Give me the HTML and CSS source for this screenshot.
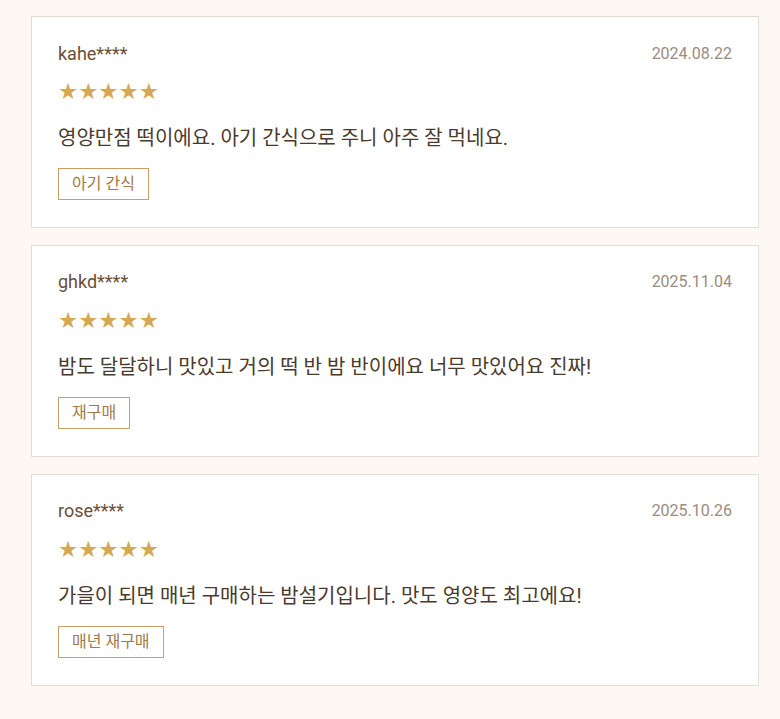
FILE: index.html
```html
<!DOCTYPE html>
<html lang="ko">
  <head>
    <meta charset="UTF-8" />
    <meta name="viewport" content="width=device-width, initial-scale=1.0" />
    <title>리뷰</title>
    <link rel="stylesheet" href="styles.css">
  </head>
  <body>
    <div class="review-list">
      <div class="review">
        <div class="review-head">
          <span class="user">kahe****</span>
          <span class="date">2024.08.22</span>
        </div>
        <div class="stars">★★★★★</div>
        <p class="text">영양만점 떡이에요. 아기 간식으로 주니 아주 잘 먹네요.</p>
        <span class="tag">아기 간식</span>
      </div>
      <div class="review">
        <div class="review-head">
          <span class="user">ghkd****</span>
          <span class="date">2025.11.04</span>
        </div>
        <div class="stars">★★★★★</div>
        <p class="text">밤도 달달하니 맛있고 거의 떡 반 밤 반이에요 너무 맛있어요 진짜!</p>
        <span class="tag">재구매</span>
      </div>
      <div class="review">
        <div class="review-head">
          <span class="user">rose****</span>
          <span class="date">2025.10.26</span>
        </div>
        <div class="stars">★★★★★</div>
        <p class="text">가을이 되면 매년 구매하는 밤설기입니다. 맛도 영양도 최고에요!</p>
        <span class="tag">매년 재구매</span>
      </div>
    </div>
  </body>
</html>
```

FILE: styles.css
```css
* {
  margin: 0;
  padding: 0;
  box-sizing: border-box;
}
body {
  background-color: #fdf8f4;
  font-family: Roboto, "Noto Sans CJK KR", sans-serif;
  color: #4a3a2c;
}
.review-list {
  width: 728px;
  margin: 16px 0 0 31px;
  display: flex;
  flex-direction: column;
  gap: 16.5px;
}
.review {
  background: #fff;
  border: 1px solid #e6dccf;
  padding: 24px 26px 27.25px;
}
.review-head {
  display: flex;
  justify-content: space-between;
  align-items: center;
  height: 24px;
}
.user {
  font-size: 18px;
  color: #6b4e37;
}
.date {
  font-size: 16px;
  color: #9a8c80;
}
.stars {
  margin-top: 14px;
  font-family: "DejaVu Sans", sans-serif;
  font-size: 22.5px;
  line-height: 24px;
  color: #d6a853;
}
.text {
  margin-top: 21px;
  font-size: 20px;
  line-height: 28px;
  color: #4a3a2c;
}
.tag {
  display: inline-block;
  margin-top: 16px;
  padding: 0 13px;
  height: 32px;
  line-height: 30px;
  border: 1px solid #c9a063;
  font-size: 16px;
  color: #a07a48;
}
```
